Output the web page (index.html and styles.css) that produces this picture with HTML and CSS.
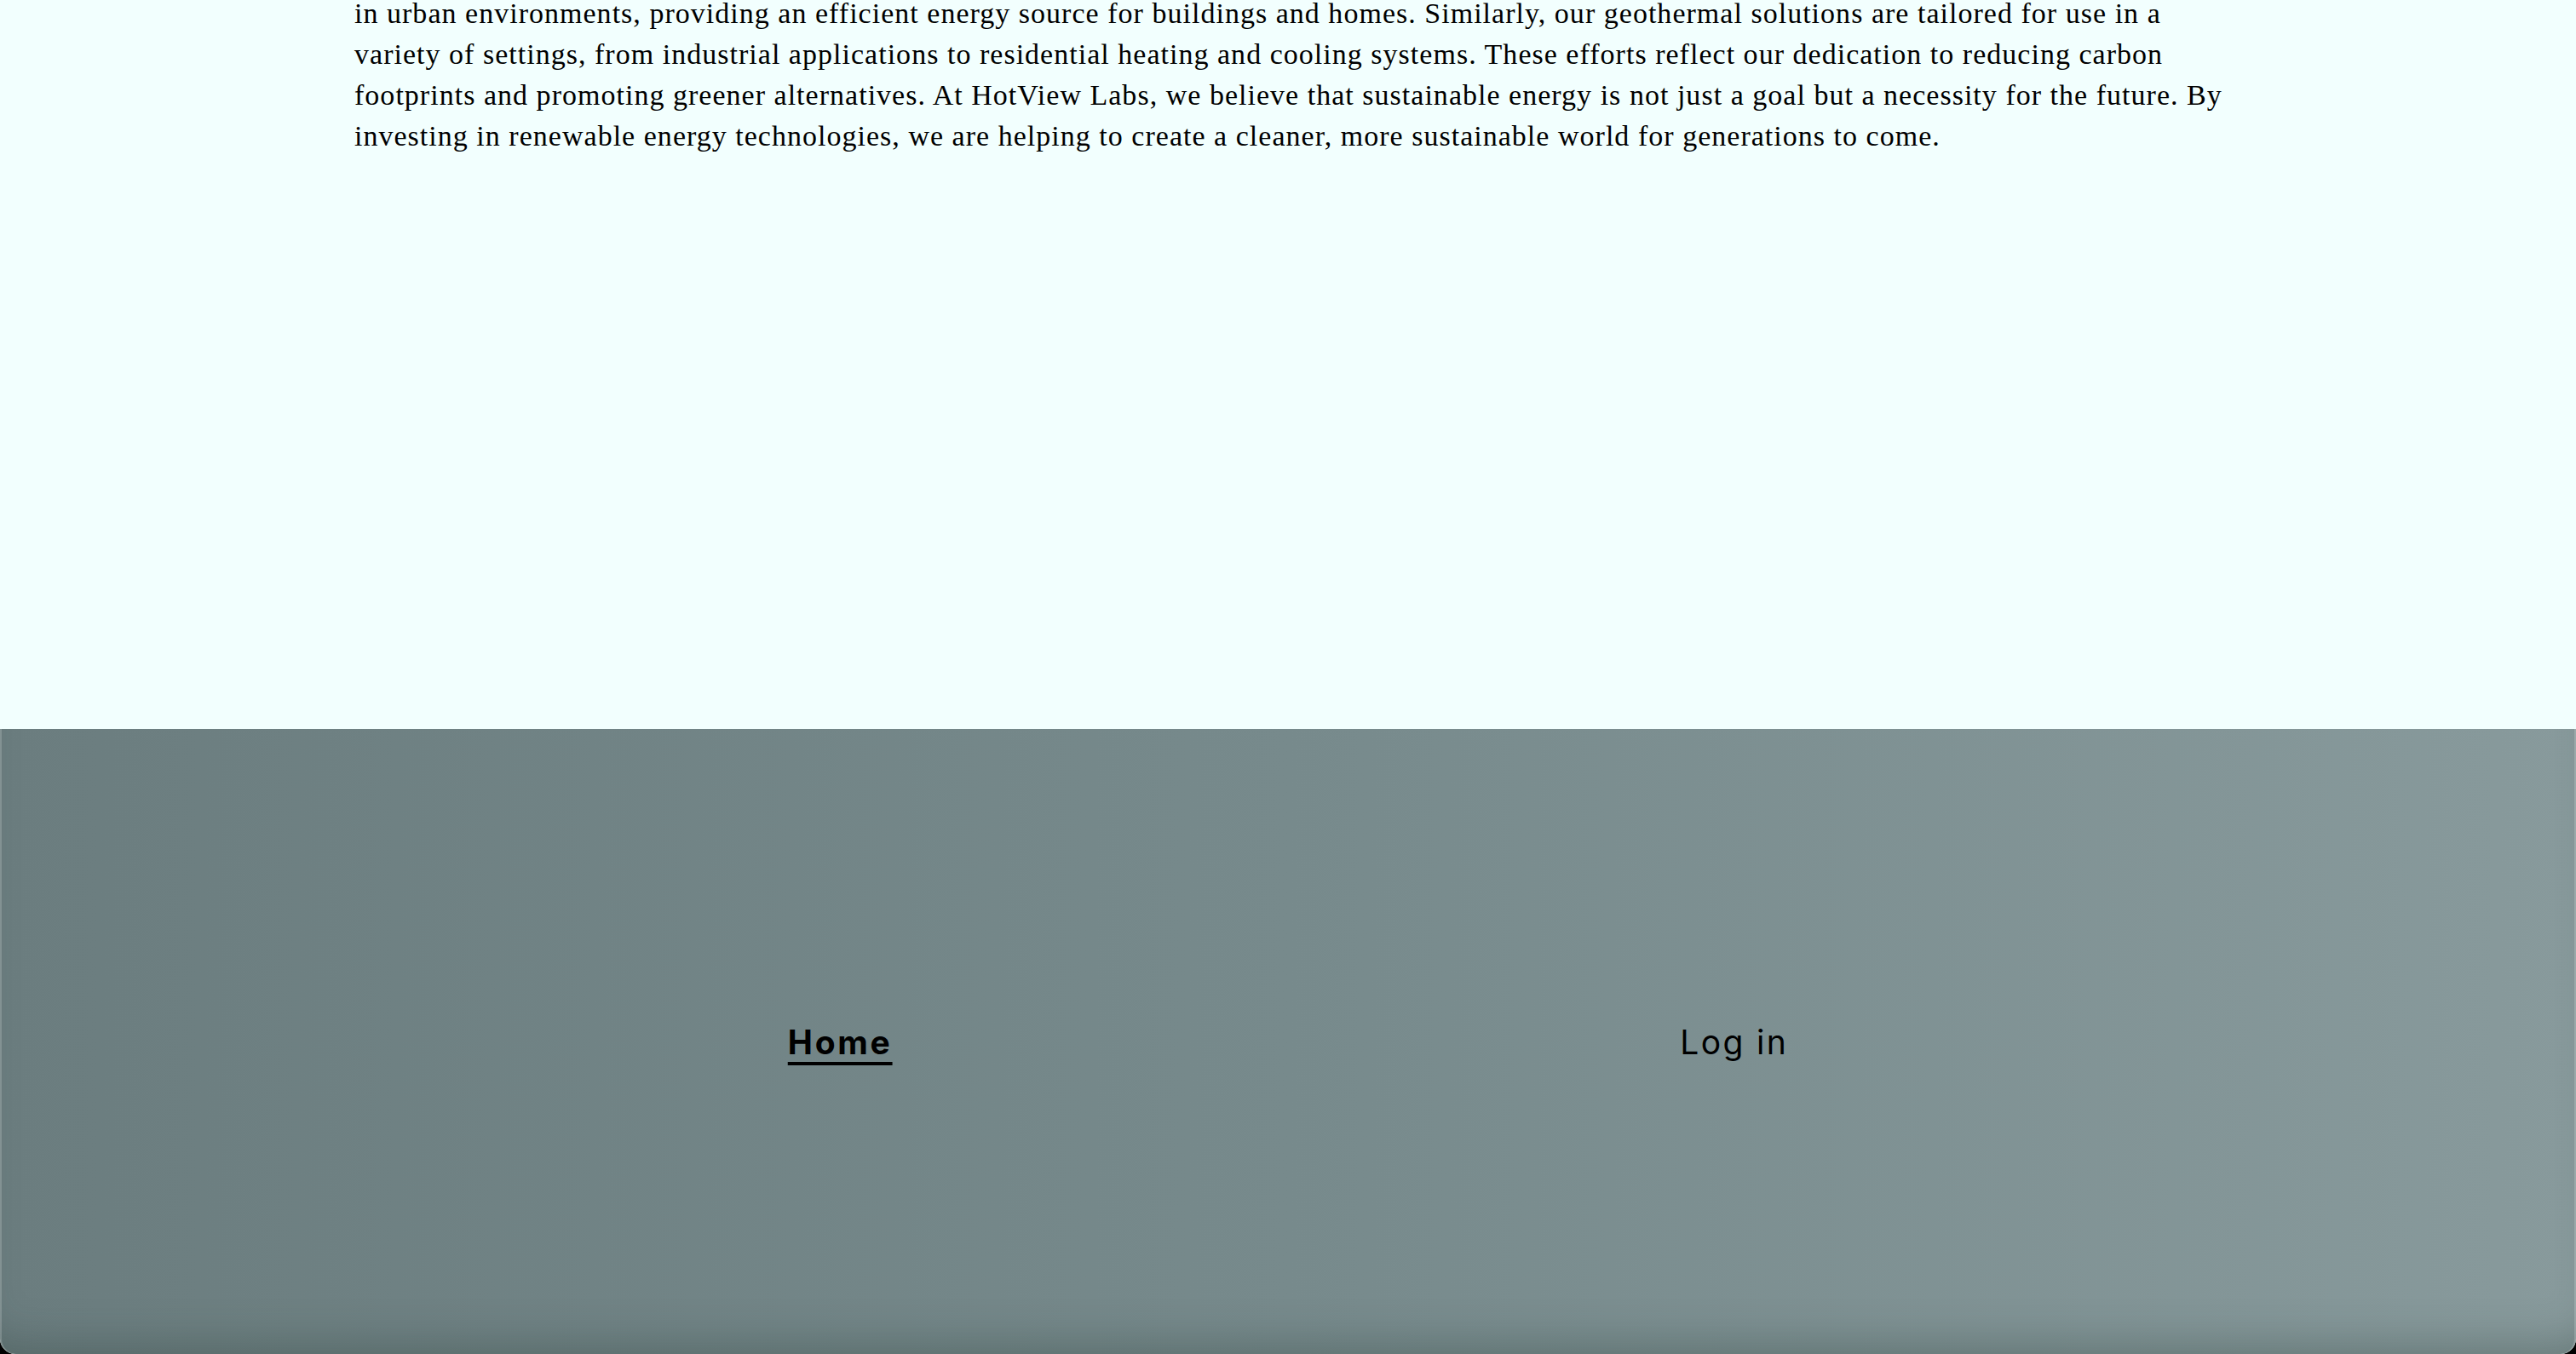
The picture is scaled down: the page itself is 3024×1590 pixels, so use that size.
FILE: index.html
```html
<!DOCTYPE html>
<html lang="en">
<head>
<meta charset="utf-8">
<title>HotView Labs</title>
<link rel="stylesheet" href="styles.css">
</head>
<body>
<main class="content">
  <p class="story">in urban environments, providing an efficient energy source for buildings and homes. Similarly, our geothermal solutions are tailored for use in a variety of settings, from industrial applications to residential heating and cooling systems. These efforts reflect our dedication to reducing carbon footprints and promoting greener alternatives. At HotView Labs, we believe that sustainable energy is not just a goal but a necessity for the future. By investing in renewable energy technologies, we are helping to create a cleaner, more sustainable world for generations to come.</p>
</main>
<footer class="site-footer">
  <nav class="footer-nav">
    <a class="footer-link footer-link--active" href="#">Home</a>
    <a class="footer-link" href="#">Log in</a>
  </nav>
</footer>
</body>
</html>
```
FILE: styles.css
```css
html {
  background: #000;
  height: 100%;
}
body {
  margin: 0;
  min-height: 100%;
  background: #f2fffe;
  display: flex;
  flex-direction: column;
  border-radius: 0 0 18px 18px;
  overflow: hidden;
}
.content {
  padding: 0 414px 0 416px;
  height: 856px;
  box-sizing: border-box;
}
.story {
  margin: -8px 0 0;
  font-family: "Liberation Serif", "Times New Roman", serif;
  font-size: 34px;
  letter-spacing: 1.02px;
  line-height: 48px;
  color: #000;
}
.site-footer {
  height: 734px;
  display: flex;
  align-items: center;
  background: linear-gradient(90deg, #6b7d7f 0%, #778a8c 50%, #889a9c 100%);
  box-shadow: inset 2px 0 0 rgba(255,255,255,0.18), inset -2px 0 0 rgba(255,255,255,0.18), inset 0 -40px 50px -30px rgba(40,60,55,0.35);
  border-radius: 0 0 18px 18px;
}
.footer-nav {
  flex: 1;
  display: flex;
  justify-content: space-evenly;
  align-items: center;
}
.footer-link {
  font-family: Inter, "DejaVu Sans", sans-serif;
  font-size: 39px;
  letter-spacing: 0.06em;
  color: #000;
  text-decoration: none;
}
.footer-link--active {
  font-weight: 700;
  letter-spacing: 0.07em;
  text-decoration: underline;
  text-decoration-thickness: 4px;
  text-underline-offset: 9px;
}
```
